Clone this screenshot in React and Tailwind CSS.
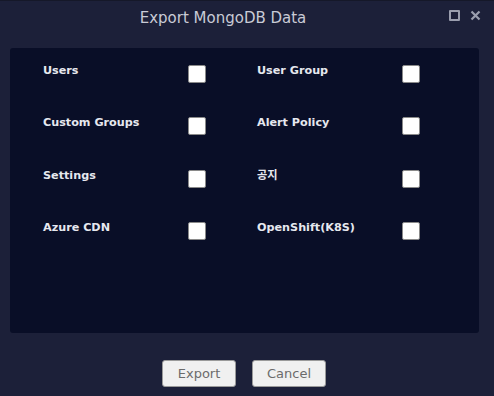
const ITEMS = [
  ['Users', 'User Group'],
  ['Custom Groups', 'Alert Policy'],
  ['Settings', '공지'],
  ['Azure CDN', 'OpenShift(K8S)'],
]

function Check() {
  return <span className="block w-[18px] h-[18px] bg-white border border-[#8a8a8a] rounded-[2px]" />
}

export default function App() {
  return (
    <div
      className="w-[494px] h-[396px] bg-[#1c2039] border-t border-[#151829] flex flex-col"
      style={{ fontFamily: 'Tahoma, "DejaVu Sans", "Noto Sans CJK KR", sans-serif' }}
    >
      <div className="h-[35px] relative flex items-center justify-center pr-[48px]">
        <span className="text-[15px] text-[#c9cbd6]">Export MongoDB Data</span>
        <div className="absolute right-[13px] top-[9px] flex items-center gap-[10px]">
          <span className="block w-[11px] h-[11px] border-2 border-[#9a9eae] rounded-[1px]" />
          <svg width="11" height="11" viewBox="0 0 11 11">
            <path d="M1.5 1.5 L9.5 9.5 M9.5 1.5 L1.5 9.5" stroke="#9a9eae" strokeWidth="2.2" />
          </svg>
        </div>
      </div>
      <div className="ml-[10px] mt-[12px] w-[469px] h-[285px] bg-[#090e27] rounded-[3px] pt-[17px] pl-[33px]">
        {ITEMS.map((row, i) => (
          <div key={i} className="flex h-[52.3px]">
            {row.map(label => (
              <div key={label} className="w-[214px] flex items-start">
                <span className="w-[145px] text-[11.2px] font-bold text-[#e6e8ef] leading-[14px] -mt-[1px]">{label}</span>
                <Check />
              </div>
            ))}
          </div>
        ))}
      </div>
      <div className="flex justify-center gap-[16px] mt-[27px] pr-[6px]">
        <button className="w-[74px] h-[27px] bg-[#f0f0f0] border border-[#9a9a9a] rounded-[3px] text-[13px] text-[#6b6b6b]">Export</button>
        <button className="w-[74px] h-[27px] bg-[#f0f0f0] border border-[#9a9a9a] rounded-[3px] text-[13px] text-[#6b6b6b]">Cancel</button>
      </div>
    </div>
  )
}
